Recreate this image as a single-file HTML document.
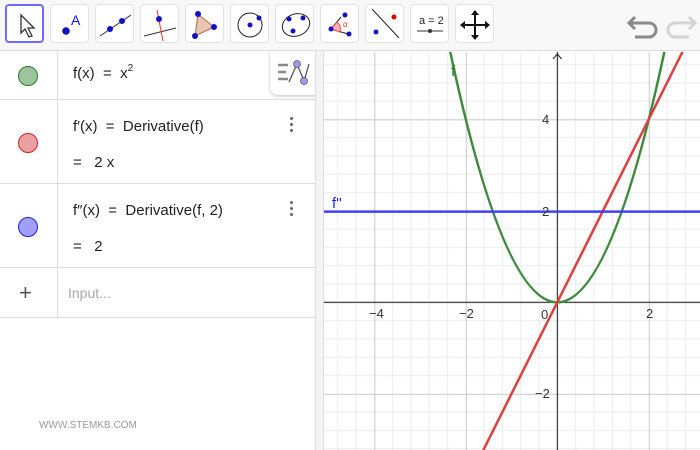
<!DOCTYPE html>
<html style="overflow:hidden"><head><meta charset="utf-8"><style>
*{margin:0;padding:0;box-sizing:border-box}
html,body{width:700px;height:450px;overflow:hidden}
body{background:#fff;font-family:"Liberation Sans","DejaVu Sans",sans-serif;position:relative}
#tb{position:absolute;left:0;top:0;width:700px;height:51px;background:#f8f8f8;border-bottom:1px solid #ddd}
.b{position:absolute;top:4px;width:39px;height:39px;border:1px solid #e2e2e2;border-radius:4px;background:#fff}
.b svg{position:absolute;left:0;top:0}
.b.sel{border:2px solid #6b6bff}
#alg{position:absolute;left:0;top:51px;width:316px;height:399px;background:#fff;border-right:1px solid #ddd;overflow:hidden}
#div{position:absolute;left:316px;top:51px;width:8px;height:399px;background:#f4f4f4;border-right:1px solid #ddd}
.row{position:absolute;left:0;width:316px;border-bottom:1px solid #ddd}
.row .l{position:absolute;left:0;top:0;bottom:0;width:58px;border-right:1px solid #ddd}
.dot{position:absolute;left:18px;width:20px;height:20px;border-radius:50%}
.t{position:absolute;left:73px;font-size:15px;line-height:18px;color:#222;white-space:nowrap}
.t sup{font-size:10px;line-height:0;vertical-align:7px}
.menu{position:absolute;left:290px;width:4px}
.menu i{display:block;width:3px;height:3px;border-radius:50%;background:#666;margin-bottom:3px}
</style></head><body>
<div id="tb">
 <div class="b sel" style="left:5px"><svg width="39" height="39"><path d="M14 9 L14 27 L18 23 L22 31 L25 30 L21 22 L27 22 Z" fill="#fff" stroke="#333" stroke-width="1.3"/></svg></div>
 <div class="b" style="left:50px"><svg width="39" height="39"><circle cx="15" cy="26" r="3.5" fill="#1010c8" stroke="#000" stroke-width=".5"/><text x="20" y="20" font-size="14" fill="#1010e0" font-family="Liberation Sans">A</text></svg></div>
 <div class="b" style="left:95px"><svg width="39" height="39"><line x1="4" y1="31" x2="35" y2="10" stroke="#333" stroke-width="1"/><circle cx="14" cy="24" r="3" fill="#1010c8"/><circle cx="26" cy="16" r="3" fill="#1010c8"/></svg></div>
 <div class="b" style="left:140px"><svg width="39" height="39"><line x1="3" y1="31" x2="35" y2="23" stroke="#333"/><line x1="16" y1="5" x2="22" y2="36" stroke="#e33"/><circle cx="18" cy="14" r="3" fill="#1010c8"/></svg></div>
 <div class="b" style="left:185px"><svg width="39" height="39"><path d="M12 9 L28 22 L9 31 Z" fill="#e8c4b4" stroke="#b0704a"/><circle cx="12" cy="9" r="3" fill="#1010c8"/><circle cx="28" cy="22" r="3" fill="#1010c8"/><circle cx="9" cy="31" r="3" fill="#1010c8"/></svg></div>
 <div class="b" style="left:230px"><svg width="39" height="39"><circle cx="19" cy="20" r="12" fill="none" stroke="#222"/><circle cx="19" cy="20" r="2.5" fill="#1010c8"/><circle cx="28" cy="13" r="2.5" fill="#1010c8"/></svg></div>
 <div class="b" style="left:275px"><svg width="39" height="39"><ellipse cx="20" cy="20" rx="14" ry="11" transform="rotate(-20 20 20)" fill="none" stroke="#222"/><circle cx="13" cy="14" r="2.5" fill="#1010c8"/><circle cx="27" cy="13" r="2.5" fill="#1010c8"/><circle cx="17" cy="26" r="2.5" fill="#1010c8"/></svg></div>
 <div class="b" style="left:320px"><svg width="39" height="39"><path d="M10 24 L20 12 M10 24 L27 29" stroke="#222" fill="none"/><path d="M10 24 L16 17 A9 9 0 0 1 19 27 Z" fill="#f4b8b8" stroke="#e44"/><circle cx="10" cy="24" r="2.5" fill="#1010c8"/><circle cx="24" cy="10" r="2.5" fill="#1010c8"/><circle cx="28" cy="29" r="2.5" fill="#1010c8"/><text x="22" y="22" font-size="8" fill="#e33">α</text></svg></div>
 <div class="b" style="left:365px"><svg width="39" height="39"><line x1="6" y1="4" x2="33" y2="33" stroke="#222"/><circle cx="28" cy="12" r="2.5" fill="#d00"/><circle cx="10" cy="27" r="2.5" fill="#1010c8"/></svg></div>
 <div class="b" style="left:410px"><svg width="39" height="39"><text x="8" y="19" font-size="11" fill="#222" font-family="Liberation Sans">a = 2</text><line x1="6" y1="26" x2="32" y2="26" stroke="#333"/><circle cx="19" cy="26" r="2" fill="#333"/></svg></div>
 <div class="b" style="left:455px"><svg width="39" height="39"><path d="M19 8 V32 M7 20 H31" stroke="#111" stroke-width="2"/><path d="M19 5 L15 10 H23 Z M19 35 L15 30 H23 Z M4 20 L9 16 V24 Z M34 20 L29 16 V24 Z" fill="#111"/></svg></div>
 <svg style="position:absolute;left:625px;top:10px" width="75" height="32"><path d="M10 7 L4 13 L10 19 M4 13 H24 A7 7 0 0 1 24 27 H10" fill="none" stroke="#8a8a8a" stroke-width="3"/><path d="M64 7 L70 13 L64 19 M70 13 H50 A7 7 0 0 0 50 27 H64" fill="none" stroke="#d4d4d4" stroke-width="3"/></svg>
</div>
<div id="alg">
 <div class="row" style="top:0;height:49px"><div class="l"></div><div class="dot" style="top:15px;background:#9dc49d;border:1px solid #2a7a2a"></div><div class="t" style="top:14px">f(x) &nbsp;= &nbsp;x<sup>2</sup></div></div>
 <div class="row" style="top:49px;height:84px"><div class="l"></div><div class="dot" style="top:33px;background:#eaa0a0;border:1px solid #d02020"></div><div class="t" style="top:18px">f′(x) &nbsp;= &nbsp;Derivative(f)</div><div class="t" style="top:54px">= &nbsp;&nbsp;2 x</div><div class="menu" style="top:17px"><i></i><i></i><i></i></div></div>
 <div class="row" style="top:133px;height:84px"><div class="l"></div><div class="dot" style="top:33px;background:#a0a0fc;border:1px solid #2020e0"></div><div class="t" style="top:18px">f″(x) &nbsp;= &nbsp;Derivative(f, 2)</div><div class="t" style="top:54px">= &nbsp;&nbsp;2</div><div class="menu" style="top:17px"><i></i><i></i><i></i></div></div>
 <div class="row" style="top:217px;height:50px"><div class="l"></div><div style="position:absolute;left:19px;top:13px;font-size:22px;line-height:24px;color:#555">+</div><div class="t" style="left:68px;top:16px;color:#a8a8a8;font-size:14px">Input...</div></div>
 <div style="position:absolute;left:270px;top:0;width:46px;height:44px;background:#fff;border-radius:0 0 0 8px;box-shadow:0 1px 3px rgba(0,0,0,.25)"><svg width="46" height="44"><path d="M8 14 H18 M8 21 H16 M8 28 H18" stroke="#888" stroke-width="2.5"/><path d="M19 31 L27 13 L34 30 L39 13" fill="none" stroke="#555" stroke-width="1.3"/><circle cx="27" cy="13" r="3.5" fill="#9999ee" stroke="#555" stroke-width=".7"/><circle cx="34" cy="30" r="3.5" fill="#9999ee" stroke="#555" stroke-width=".7"/></svg></div>
 <div style="position:absolute;left:39px;top:369px;font-size:10px;line-height:12px;color:#999">WWW.STEMKB.COM</div>
</div>
<div id="div"></div>
<svg style="position:absolute;left:0;top:0" width="700" height="450">
 <defs>
  <pattern id="g" patternUnits="userSpaceOnUse" x="557.3" y="302.3" width="91.5" height="91.5">
   <path d="M18.3 0V91.5M36.6 0V91.5M54.9 0V91.5M73.2 0V91.5M0 18.3H91.5M0 36.6H91.5M0 54.9H91.5M0 73.2H91.5" stroke="#ebebeb" stroke-width="1"/>
   <path d="M0.5 0V91.5M0 0.5H91.5" stroke="#c8c8c8" stroke-width="1"/>
  </pattern>
  <clipPath id="c"><rect x="324" y="52" width="376" height="398"/></clipPath>
 </defs>
 <g clip-path="url(#c)">
  <rect x="324" y="52" width="376" height="398" fill="url(#g)"/>
  <line x1="324" y1="302.3" x2="700" y2="302.3" stroke="#222" stroke-width="1"/>
  <line x1="557.3" y1="52" x2="557.3" y2="450" stroke="#222" stroke-width="1"/>
  <path d="M553 59 L557.3 54 L561.6 59" fill="none" stroke="#222"/>
  <path d="M442.9 16.4 Q557.3 588.2 671.7 16.4" fill="none" stroke="#3e8a3e" stroke-width="2.5"/>
  <line x1="420" y1="576.8" x2="694.5" y2="27.8" stroke="#dc4040" stroke-width="2.5"/>
  <line x1="324" y1="211.6" x2="700" y2="211.6" stroke="#4040f4" stroke-width="2.5"/>
  <g font-family="Liberation Sans" font-size="13" fill="#333">
   <text x="369" y="318">−4</text><text x="459" y="318">−2</text><text x="541" y="319">0</text><text x="646" y="318">2</text>
   <text x="542" y="124">4</text><text x="542" y="216">2</text><text x="535" y="398">−2</text>
  </g>
  <text x="451" y="76" font-size="15" fill="#2a7a2a" font-family="Liberation Sans">f</text>
  <text x="332" y="208" font-size="15" fill="#2020e0" font-family="Liberation Sans">f''</text>
 </g>
</svg>
</body></html>
